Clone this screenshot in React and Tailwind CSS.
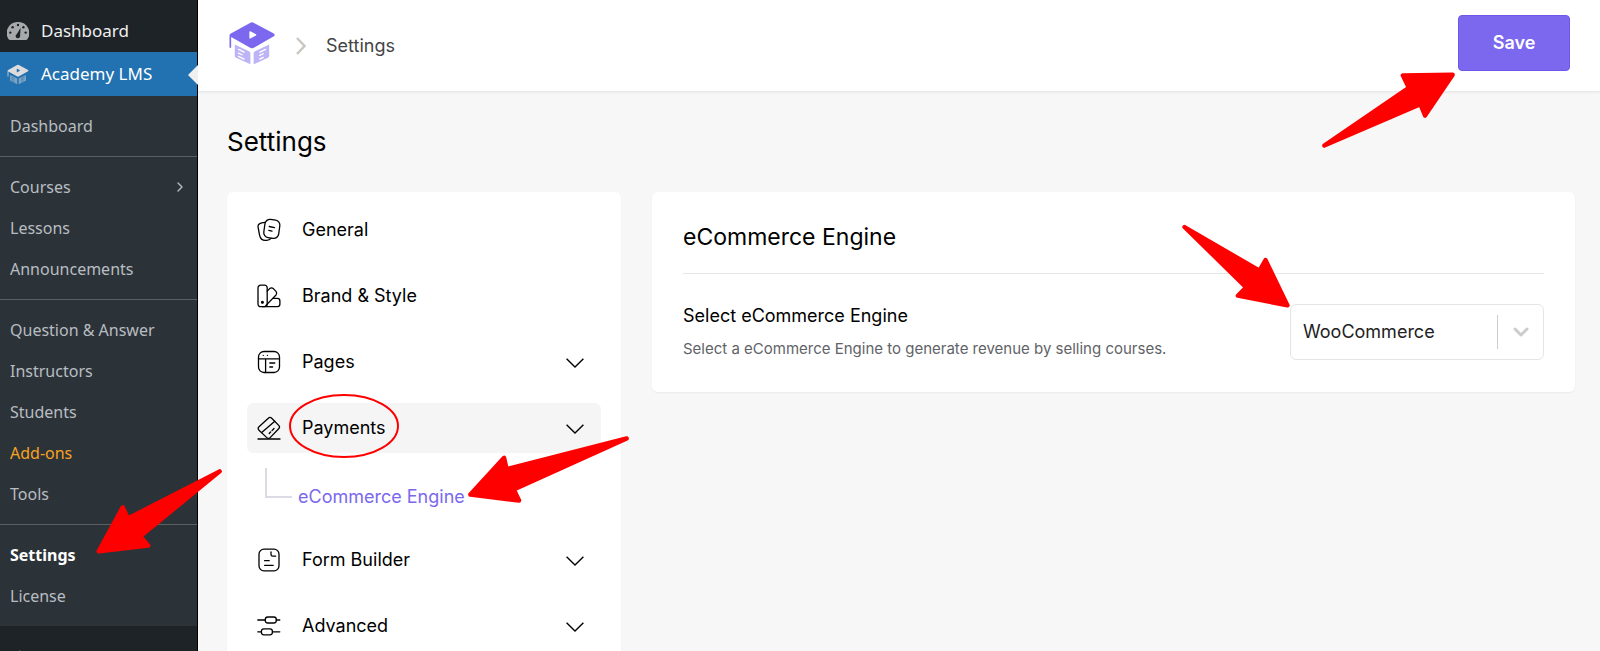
import { ChevronDown, ChevronRight } from "lucide-react";
import clsx from "clsx";

const ADMIN_GROUPS = [
  ["Dashboard"],
  ["Courses", "Lessons", "Announcements"],
  ["Question & Answer", "Instructors", "Students", "Add-ons", "Tools"],
  ["Settings", "License"],
];

const iconProps = {
  viewBox: "0 0 24 24",
  fill: "none",
  stroke: "currentColor",
  strokeWidth: 1.3,
  strokeLinecap: "round",
  strokeLinejoin: "round",
  className: "size-6 shrink-0",
  "aria-hidden": true,
};

const GeneralIcon = () => (
  <svg {...iconProps}>
    <rect x="7.3" y="1.7" width="15" height="18.4" rx="5" transform="rotate(8 15 11)" />
    <path d="M7.6 4.3C3.6 4.6.8 6 1 8.6l1.5 8.2c.8 4 3.6 6 7 5.6 2-.2 3.5-.8 4.6-2" />
    <path d="M12.2 8.5l5.3 1.1M11.8 12.4l3.2.8" />
  </svg>
);

const BrandIcon = () => (
  <svg {...iconProps}>
    <rect x="1" y="1.2" width="9.2" height="21.5" rx="2.6" />
    <circle cx="5.4" cy="18.3" r=".9" fill="currentColor" />
    <path d="M10.2 7l2.5-2.4c1.2-1 2.5-1 3.6 0l2.7 2.8c1 1.2 1 2.4 0 3.6L8.8 21.6" />
    <path d="M16.4 14.4h4c1.6 0 2.5.9 2.5 2.5v3.2c0 1.7-.9 2.6-2.5 2.6H5.5" />
  </svg>
);

const PagesIcon = () => (
  <svg {...iconProps}>
    <rect x="1.5" y="1.5" width="21" height="21" rx="5.5" />
    <path d="M1.5 8.8h21M8.6 8.8v13.7M12.8 13h5M12.8 17h2.8" />
    <path d="M6.2 5.3h.1M10.4 5.3h.1" />
  </svg>
);

const PaymentsIcon = () => (
  <svg {...iconProps}>
    <path d="M11.3 2.2c1-1 2.4-1 3.4 0l7 7.2c1 1 1 2.3 0 3.3l-8.6 8.9c-1 1-2.3 1-3.3 0L2 14.2c-1-1-1-2.4 0-3.4z" />
    <path d="M4.7 16.6L17.8 5.2M12.2 17.5l1.4-1.5M15 14.6l2-2.1M1 23h22" />
  </svg>
);

const FormIcon = () => (
  <svg {...iconProps}>
    <rect x="2" y="1.2" width="20" height="21.6" rx="5" />
    <path d="M14 3.8v2.7c0 1 .7 1.7 1.7 1.7h2.9M7.6 12.7h4.6M7.6 17.3h8.6" />
  </svg>
);

const AdvancedIcon = () => (
  <svg {...iconProps}>
    <rect x="8.3" y="3" width="11" height="6" rx="2.5" />
    <rect x="4.4" y="14.8" width="11" height="6" rx="2.5" />
    <path d="M.8 6h7.5M19.3 6h3.5M.8 17.8h3.6M15.4 17.8h7.4" />
  </svg>
);

const NAV_ITEMS = [
  { label: "General", icon: GeneralIcon },
  { label: "Brand & Style", icon: BrandIcon },
  { label: "Pages", icon: PagesIcon, expandable: true },
  { label: "Payments", icon: PaymentsIcon, expandable: true, active: true },
  { label: "Form Builder", icon: FormIcon, expandable: true },
  { label: "Advanced", icon: AdvancedIcon, expandable: true },
];

const AcademyLogo = ({ className, cap, book, mark }) => (
  <svg viewBox="0 0 144 136" className={className} aria-hidden="true">
    <path
      d="M66 6q6-4 12 0l60 32q5 4 0 8L79 80q-7 4-14 0L9 48v33H4V44q0-4 4-6z"
      fill={cap}
    />
    <path d="M64 33q0-3 3-2l17 9q2 2 0 4l-17 9q-3 1-3-2z" fill={mark} />
    <path d="M20 71l44 21q3 2 3 5v34l-43-20q-4-2-4-6z" fill={book} />
    <path d="M124 71L80 92q-3 2-3 5v34l43-20q4-2 4-6z" fill={book} />
    <path
      d="M31 86l17 8M31 97l11 5M31 107l17 8M113 86l-17 8M106 99l-11 5M106 110l-11 5"
      stroke={mark}
      strokeWidth="4"
      strokeLinecap="round"
    />
  </svg>
);

const GaugeIcon = () => (
  <svg viewBox="0 0 22 19" className="h-[19px] w-[22px] shrink-0" aria-hidden="true">
    <path d="M11 0a11 11 0 0 1 9.4 17.2q-.5.8-1.5.8H3.1q-1 0-1.5-.8A11 11 0 0 1 11 0z" fill="#a7aaad" />
    <g fill="#1d2327">
      <circle cx="11" cy="3" r="1.2" />
      <circle cx="5.6" cy="5.3" r="1.2" />
      <circle cx="3.3" cy="10.6" r="1.2" />
      <circle cx="18.7" cy="10.6" r="1.2" />
      <circle cx="16.4" cy="5.3" r="1.2" />
      <path d="M13.6 5.8l-.5 7.4a2.3 2.3 0 1 1-3.2-1.3z" />
    </g>
  </svg>
);

const Arrow = ({ viewBox, d, className }) => (
  <svg viewBox={viewBox} className={clsx("pointer-events-none absolute z-20 max-w-none", className)} aria-hidden="true">
    <path d={d} fill="#ff0000" stroke="#ff0000" strokeWidth="13" strokeLinejoin="round" />
  </svg>
);

const AdminSidebar = () => (
  <aside className="relative z-10 w-[198px] shrink-0 border-r border-black bg-[#1d2327] font-['Noto_Sans',sans-serif] text-[#f0f0f1]">
    <a href="#wp-dashboard" className="flex h-[52px] items-center gap-3 pt-[10px] pl-[7px] text-[17px]">
      <GaugeIcon />
      Dashboard
    </a>
    <a href="#academy" className="relative flex h-11 items-center gap-3 bg-[#2271b1] pl-[7px] text-[17px] text-white">
      <AcademyLogo className="h-[21px] w-[22px] shrink-0" cap="#dcdcde" book="#7fa3c2" mark="#2271b1" />
      Academy LMS
      <svg viewBox="0 0 10 20" className="absolute top-[13px] -right-px h-5 w-2.5" aria-hidden="true">
        <path d="M10 0v20L0 10z" fill="#f0f0f1" />
      </svg>
    </a>

    <nav className="divide-y divide-[#5a5f63] bg-[#2c3338] text-base text-[#b8bdc2]">
      {ADMIN_GROUPS.map((group) => (
        <ul key={group[0]} className="pt-[10px] pb-[9px]">
          {group.map((label) => (
            <li key={label} className="relative">
              <a
                href="#admin"
                className={clsx(
                  "flex h-[41px] items-center justify-between pr-[9px] pb-0.5 pl-2.5",
                  label === "Add-ons" && "text-[#f6a223]",
                  label === "Settings" && "font-bold text-white"
                )}
              >
                {label}
                {label === "Courses" && <ChevronRight className="size-4" />}
              </a>
              {label === "Settings" && (
                <Arrow
                  viewBox="289 206 378 255"
                  d="M660 213L385 354L369 321L297 453L446 436L422 408Z"
                  className="-top-[66px] left-24 h-[85px] w-[126px]"
                />
              )}
            </li>
          ))}
        </ul>
      ))}
    </nav>
    <a href="#posts" aria-label="Posts" className="flex h-[52px] pt-6 pl-[9px]">
      <svg viewBox="0 0 20 20" className="size-5" fill="#a7aaad" aria-hidden="true">
        <path d="M10.4 0l6.6 6.6-1.2 1.2-1-.3-3.4 3.4.4 3.6-1.4 1.4-3.2-3.2L2 18l-1-1 5-5.200-3.200-3.200L4.300 7.200l3.600.4 3.400-3.400-.3-1z" />
      </svg>
    </a>
  </aside>
);

const Header = () => (
  <header className="flex h-[92px] items-start justify-between border-b border-[#e9e9e9] bg-white pr-[30px] pl-[30px] shadow-xs">
    <div className="flex items-center gap-5 pt-[21px]">
      <AcademyLogo className="h-[45px] w-12" cap="#7b68ee" book="#bdb3f7" mark="#ffffff" />
      <svg viewBox="0 0 10 18" className="mt-1 h-[18px] w-2.5" fill="none" stroke="#c9c6c2" strokeWidth="2.4" aria-hidden="true">
        <path d="M1 1l7.5 8L1 17" />
      </svg>
      <span className="mt-1 text-lg text-[#444444]">Settings</span>
    </div>
    <div className="relative mt-[15px]">
      <button
        type="button"
        className="h-14 w-28 rounded border border-[#6f57ea] bg-[#7b68ee] text-lg font-semibold text-white"
      >
        Save
      </button>
      <Arrow
        viewBox="484 216 400 228"
        d="M491 437L745 263L727 226L877 224L794 347L780 313Z"
        className="top-[57px] right-full mr-[3px] h-[76px] w-[133px]"
      />
    </div>
  </header>
);

const SettingsNav = () => (
  <nav className="flex w-[394px] shrink-0 flex-col gap-4 rounded-md bg-white px-5 py-[13px] shadow-xs">
    {NAV_ITEMS.map(({ label, icon: Icon, expandable, active }) => (
      <div key={label} className="flex flex-col">
        <button
          type="button"
          aria-expanded={expandable ? !!active : undefined}
          className={clsx(
            "flex h-[50px] items-center rounded-md pr-[17px] pl-[10px] text-lg text-black",
            active && "bg-[#f5f5f5]"
          )}
        >
          <Icon />
          <span className="relative ml-[21px]">
            {label}
            {active && (
              <svg
                viewBox="0 0 110 64"
                className="pointer-events-none absolute -top-5 -left-[13px] h-16 w-[110px] max-w-none"
                fill="none"
                stroke="#ff0000"
                strokeWidth="2"
                aria-hidden="true"
              >
                <ellipse cx="55" cy="32" rx="54" ry="31" />
              </svg>
            )}
          </span>
          {expandable && (
            <svg viewBox="0 0 18 10" className="mt-0.5 ml-auto h-2.5 w-[18px]" fill="none" stroke="currentColor" strokeWidth="1.4" aria-hidden="true">
              <path d="M.6.8L9 9L17.4.8" />
            </svg>
          )}
        </button>
        {active && (
          <div className="flex items-start pt-[15px] pb-2 pl-[18px]">
            <span className="h-[30px] w-[27px] border-b-2 border-l-2 border-[#dcdae4]" />
            <a href="#ecommerce" className="relative mt-[15px] ml-1.5 text-lg text-[#7b68ee]">
              eCommerce Engine
              <Arrow
                viewBox="745 287 482 200"
                d="M1220 294L861 386L853 352L752 462L898 480L882 447Z"
                className="-top-[47px] left-full ml-[3px] h-[67px] w-[161px]"
              />
            </a>
          </div>
        )}
      </div>
    ))}
  </nav>
);

const EngineCard = () => (
  <section className="flex-1 rounded-md bg-white px-[31px] pt-6 pb-8 shadow-xs">
    <h2 className="border-b border-[#e6e6e6] pb-[15px] text-[23px] leading-[42px] text-black">eCommerce Engine</h2>
    <div className="flex items-start justify-between pt-[30px]">
      <div>
        <label htmlFor="engine" className="block text-lg leading-6 text-black">
          Select eCommerce Engine
        </label>
        <p className="mt-2.5 text-[15px] leading-[22px] text-[#5f6368]">
          Select a eCommerce Engine to generate revenue by selling courses.
        </p>
      </div>
      <div className="relative w-[254px] shrink-0">
        <select
          id="engine"
          className="h-14 w-full appearance-none rounded-md border border-[#e5e5e5] bg-white px-3 text-lg text-[#222222]"
        >
          <option>WooCommerce</option>
        </select>
        <div className="pointer-events-none absolute inset-y-0 right-0 flex items-center gap-[11px] pr-[11px]">
          <span className="h-[34px] w-px bg-[#cccccc]" />
          <ChevronDown className="size-6 text-[#cccccc]" strokeWidth={3} />
        </div>
        <Arrow
          viewBox="65 673 323 252"
          d="M72 682L297 813L315 781L381 917L232 888L257 863Z"
          className="-top-20 right-full h-[84px] w-[108px]"
        />
      </div>
    </div>
  </section>
);

const App = () => {
  return (
    <div className="flex h-screen overflow-hidden bg-[#f7f7f7] font-['Inter',sans-serif]">
      <AdminSidebar />
      <div className="min-w-0 flex-1">
        <Header />
        <main className="pt-8 pr-[25px] pl-[29px]">
          <h1 className="text-[26px] leading-9 text-black">Settings</h1>
          <div className="mt-8 flex items-start gap-[31px]">
            <SettingsNav />
            <EngineCard />
          </div>
        </main>
      </div>
    </div>
  );
};

export default App;
